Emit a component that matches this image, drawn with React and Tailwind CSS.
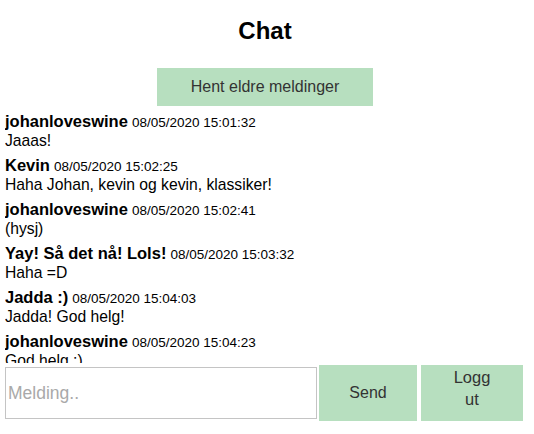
import { useState } from "react";

const messages = [
  { user: "johanloveswine", time: "08/05/2020 15:01:32", text: "Jaaas!" },
  { user: "Kevin", time: "08/05/2020 15:02:25", text: "Haha Johan, kevin og kevin, klassiker!" },
  { user: "johanloveswine", time: "08/05/2020 15:02:41", text: "(hysj)" },
  { user: "Yay! Så det nå! Lols!", time: "08/05/2020 15:03:32", text: "Haha =D" },
  { user: "Jadda :)", time: "08/05/2020 15:04:03", text: "Jadda! God helg!" },
  { user: "johanloveswine", time: "08/05/2020 15:04:23", text: "God helg :)" },
];

export default function App() {
  const [text, setText] = useState("");

  return (
    <div className="w-[520px] ml-[5px] font-['Liberation_Sans',Arial,sans-serif] text-black">
      <h1 className="text-center text-2xl font-bold leading-7 pt-[17px]">Chat</h1>

      <div className="flex justify-center mt-[23px]">
        <button className="w-[216px] h-[38px] bg-[#b7dfbf] text-[#333] text-base">
          Hent eldre meldinger
        </button>
      </div>

      {/* message list, clipped like the original */}
      <div className="mt-[6px] h-[251px] overflow-hidden">
        {messages.map((m, id) => (
          <div key={id} className="mb-[6px]">
            <div className="h-[19px] flex items-baseline gap-1 whitespace-nowrap">
              <span className="font-bold text-[16.5px] leading-[19px]">{m.user}</span>
              <span className="text-[13.5px] leading-[19px]">{m.time}</span>
            </div>
            <div className="h-[19px] leading-[19px] text-[15.7px]">{m.text}</div>
          </div>
        ))}
      </div>

      <div className="mt-[2px] flex items-center h-[56px]">
        <input
          className="w-[312px] h-[52px] border border-[#c4c4c4] px-[2px] text-[17.5px] placeholder:text-[#a9a9a9] outline-none"
          placeholder="Melding.."
          value={text}
          onChange={(e) => setText(e.target.value)}
        />
        <button className="ml-[2px] w-[98px] h-[56px] bg-[#b7dfbf] text-[#333] text-base">
          Send
        </button>
        <button className="ml-1 w-[102px] h-[56px] bg-[#b7dfbf] text-[#333] text-[16.5px] leading-[22px] px-7 pb-[10px]">
          Logg ut
        </button>
      </div>
    </div>
  );
}
